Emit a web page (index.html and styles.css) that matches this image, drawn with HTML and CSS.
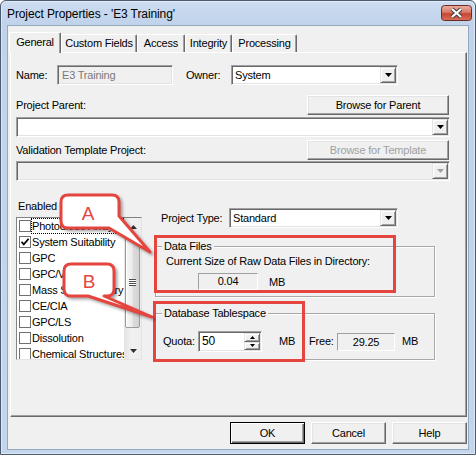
FILE: index.html
```html
<!DOCTYPE html>
<html lang="en">
<head>
<meta charset="utf-8">
<title>Project Properties</title>
<link rel="stylesheet" href="styles.css">
</head>
<body>
<div class="window">
  <div class="titlebar">
    <span class="title">Project Properties - 'E3 Training'</span>
    <div class="close">
      <svg width="31" height="16" viewBox="0 0 31 16">
        <defs>
          <linearGradient id="cg" x1="0" y1="0" x2="0" y2="1">
            <stop offset="0" stop-color="#eab0a3"/>
            <stop offset="0.45" stop-color="#d9796a"/>
            <stop offset="0.55" stop-color="#c54532"/>
            <stop offset="1" stop-color="#d8725c"/>
          </linearGradient>
        </defs>
        <rect x="0.5" y="0.5" width="30" height="15" rx="3" fill="url(#cg)" stroke="#6e2b23"/>
        <path d="M11 4 L20 12 M20 4 L11 12" stroke="#3f3f3f" stroke-width="4.2"/>
        <path d="M11 4 L20 12 M20 4 L11 12" stroke="#ffffff" stroke-width="2.2"/>
      </svg>
    </div>
  </div>

  <div class="client">
    <div class="tabs">
      <div class="tab active tab-general">General</div>
      <div class="tab tab-custom">Custom Fields</div>
      <div class="tab tab-access">Access</div>
      <div class="tab tab-integrity">Integrity</div>
      <div class="tab tab-processing">Processing</div>
    </div>

    <div class="panel">
      <div class="row name-row">
        <span class="lbl name-lbl">Name:</span>
        <div class="field disabled name-field">E3 Training</div>
        <span class="lbl owner-lbl">Owner:</span>
        <div class="combo owner-combo">
          <span class="combo-text">System</span>
          <span class="drop"><svg width="7" height="4" viewBox="0 0 7 4"><polygon points="0,0 7,0 3.5,4" fill="#000"/></svg></span>
        </div>
      </div>

      <div class="row browse-row parent-row">
        <span class="lbl">Project Parent:</span>
        <div class="btn browse-btn">Browse for Parent</div>
      </div>
      <div class="combo wide-combo parent-combo">
        <span class="combo-text"></span>
        <span class="drop"><svg width="7" height="4" viewBox="0 0 7 4"><polygon points="0,0 7,0 3.5,4" fill="#000"/></svg></span>
      </div>

      <div class="row browse-row template-row">
        <span class="lbl">Validation Template Project:</span>
        <div class="btn browse-btn disabled">Browse for Template</div>
      </div>
      <div class="combo wide-combo disabled template-combo">
        <span class="combo-text"></span>
        <span class="drop"><svg width="7" height="4" viewBox="0 0 7 4"><polygon points="0,0 7,0 3.5,4" fill="#a0a0a0"/></svg></span>
      </div>

      <div class="lower">
        <div class="left-col">
          <div class="lbl enabled-lbl">Enabled Options:</div>
          <div class="listbox">
            <div class="items">
              <div class="item focus"><span class="cb"></span><span class="itxt">Photodiode Array</span></div>
              <div class="item"><span class="cb"><svg width="10" height="10" viewBox="0 0 10 10"><path d="M1.5 4.8 L3.8 7.4 L8.6 1.8" fill="none" stroke="#000" stroke-width="1.7"/></svg></span><span class="itxt">System Suitability</span></div>
              <div class="item"><span class="cb"></span><span class="itxt">GPC</span></div>
              <div class="item"><span class="cb"></span><span class="itxt">GPC/Viscometry</span></div>
              <div class="item"><span class="cb"></span><span class="itxt">Mass Spectrometry</span></div>
              <div class="item"><span class="cb"></span><span class="itxt">CE/CIA</span></div>
              <div class="item"><span class="cb"></span><span class="itxt">GPC/LS</span></div>
              <div class="item"><span class="cb"></span><span class="itxt">Dissolution</span></div>
              <div class="item"><span class="cb"></span><span class="itxt">Chemical Structures</span></div>
            </div>
            <div class="vscroll">
              <div class="sb-arrow"><svg width="7" height="4" viewBox="0 0 7 4"><polygon points="0,4 7,4 3.5,0" fill="#303030"/></svg></div>
              <div class="sb-track">
                <div class="thumb"><span class="grip"></span></div>
              </div>
              <div class="sb-arrow"><svg width="7" height="4" viewBox="0 0 7 4"><polygon points="0,0 7,0 3.5,4" fill="#303030"/></svg></div>
            </div>
          </div>
        </div>

        <div class="right-col">
          <div class="row ptype-row">
            <span class="lbl ptype-lbl">Project Type:</span>
            <div class="combo ptype-combo">
              <span class="combo-text">Standard</span>
              <span class="drop"><svg width="7" height="4" viewBox="0 0 7 4"><polygon points="0,0 7,0 3.5,4" fill="#000"/></svg></span>
            </div>
          </div>

          <div class="group data-group">
            <span class="legend">Data Files</span>
            <div class="group-line">Current Size of Raw Data Files in Directory:</div>
            <div class="row size-row">
              <div class="static-box size-box">0.04</div>
              <span class="lbl size-unit">MB</span>
            </div>
          </div>

          <div class="group db-group">
            <span class="legend">Database Tablespace</span>
            <div class="row quota-row">
              <span class="lbl quota-lbl">Quota:</span>
              <div class="spin">
                <span class="spin-text">50</span>
                <span class="spin-btns">
                  <span class="spin-btn"><svg width="5" height="3" viewBox="0 0 5 3"><polygon points="0,3 5,3 2.5,0" fill="#000"/></svg></span>
                  <span class="spin-btn"><svg width="5" height="3" viewBox="0 0 5 3"><polygon points="0,0 5,0 2.5,3" fill="#000"/></svg></span>
                </span>
              </div>
              <span class="lbl quota-unit">MB</span>
              <span class="lbl free-lbl">Free:</span>
              <div class="static-box free-box">29.25</div>
              <span class="lbl free-unit">MB</span>
            </div>
          </div>
        </div>
      </div>
    </div>

    <div class="buttons">
      <div class="btn dlg-btn default">OK</div>
      <div class="btn dlg-btn">Cancel</div>
      <div class="btn dlg-btn">Help</div>
    </div>
  </div>

  <div class="hl hl-a"></div>
  <div class="hl hl-b"></div>

  <svg class="callouts" width="476" height="455" viewBox="0 0 476 455">
    <g class="bubble">
      <path d="M68 195 H112 Q119 195 119 202 V216 L150 252 L109 228 H68 Q61 228 61 221 V202 Q61 195 68 195 Z"/>
      <text x="88" y="219.5">A</text>
    </g>
    <g class="bubble">
      <path d="M71 264 H107 Q114 264 114 271 V289 Q114 296 107 296 H104 L152 317 L88 296 H71 Q64 296 64 289 V271 Q64 264 71 264 Z"/>
      <text x="89" y="288">B</text>
    </g>
  </svg>
</div>
</body>
</html>
```

FILE: styles.css
```css
* { box-sizing: border-box; }

html, body {
  margin: 0;
  padding: 0;
}

body {
  width: 476px;
  height: 455px;
  overflow: hidden;
  background: #ffffff;
  font-family: "Liberation Sans", Arial, sans-serif;
  font-size: 11px;
  color: #000;
}

/* ---------- window frame ---------- */
.window {
  position: relative;
  width: 476px;
  height: 455px;
  border: 1px solid #4b5b6f;
  border-radius: 6px 6px 0 0;
  background: linear-gradient(#cddcf0, #c0d3eb 24px, #c4d6ec);
  box-shadow: inset 0 0 0 1px rgba(255, 255, 255, 0.45);
  display: flex;
  flex-direction: column;
}

.titlebar {
  height: 24px;
  flex: none;
  display: flex;
  align-items: center;
  justify-content: space-between;
  padding-left: 6px;
  padding-right: 3px;
}

.title {
  font-size: 12px;
  line-height: 14px;
  margin-top: 2px;
  color: #000;
  letter-spacing: -0.1px;
}

.close {
  width: 31px;
  height: 16px;
  display: flex;
}

.client {
  flex: none;
  margin: 0 6px;
  height: 425px;
  background: #f0f0f0;
  border: 1px solid #95a9c3;
  letter-spacing: -0.2px;
}

/* ---------- tabs ---------- */
.tabs {
  display: flex;
  align-items: flex-end;
  height: 20px;
  margin-top: 6px;
  padding-left: 1px;
  position: relative;
  z-index: 1;
}

.tab {
  height: 18px;
  line-height: 16px;
  text-align: center;
  background: #f0f0f0;
  border-top: 1px solid #ffffff;
  border-left: 1px solid #ffffff;
  border-right: 1px solid #696969;
  box-shadow: inset -1px 0 0 #a0a0a0;
  border-radius: 2px 2px 0 0;
  white-space: nowrap;
}

.tab.active {
  height: 21px;
  margin-bottom: -1px;
  line-height: 19px;
}

.tab-general { width: 52px; }
.tab-custom { width: 76px; }
.tab-access { width: 48px; }
.tab-integrity { width: 47px; }
.tab-processing { width: 65px; }

/* ---------- panel ---------- */
.panel {
  margin-left: 2px;
  width: 457px;
  height: 365px;
  border-top: 1px solid #ffffff;
  border-left: 1px solid #ffffff;
  border-right: 1px solid #696969;
  border-bottom: 1px solid #696969;
  box-shadow: inset -1px -1px 0 #a0a0a0;
  padding: 12px 0 0 5px;
}

.row {
  display: flex;
  align-items: center;
}

.lbl {
  line-height: 13px;
  white-space: nowrap;
}

/* sunken controls */
.field,
.combo,
.spin {
  height: 20px;
  background: #ffffff;
  border-top: 1px solid #a0a0a0;
  border-left: 1px solid #a0a0a0;
  border-bottom: 1px solid #ffffff;
  border-right: 1px solid #ffffff;
  box-shadow: inset 1px 1px 0 #696969, inset -1px -1px 0 #e3e3e3;
}

.field {
  padding-left: 4px;
  line-height: 18px;
}

.field.disabled {
  background: #f0f0f0;
  color: #7a7a7a;
}

.combo {
  display: flex;
  align-items: stretch;
  padding: 1px;
}

.combo.disabled {
  background: #f0f0f0;
}

.combo-text {
  flex: 1;
  padding-left: 2px;
  line-height: 16px;
}

.drop {
  width: 16px;
  height: 16px;
  display: flex;
  align-items: center;
  justify-content: center;
  background: #f0f0f0;
  border-top: 1px solid #e3e3e3;
  border-left: 1px solid #e3e3e3;
  border-right: 1px solid #696969;
  border-bottom: 1px solid #696969;
  box-shadow: inset 1px 1px 0 #ffffff, inset -1px -1px 0 #a0a0a0;
}

/* raised buttons */
.btn {
  display: flex;
  align-items: center;
  justify-content: center;
  background: #f0f0f0;
  border-top: 1px solid #ffffff;
  border-left: 1px solid #ffffff;
  border-right: 1px solid #696969;
  border-bottom: 1px solid #696969;
  box-shadow: inset -1px -1px 0 #a0a0a0, inset 1px 1px 0 #e3e3e3;
  white-space: nowrap;
}

.btn.disabled {
  color: #a0a0a0;
}

/* name / owner row */
.name-row { height: 20px; }
.name-lbl { width: 41px; }
.name-field { width: 116px; }
.owner-lbl { width: 45px; margin-left: 13px; }
.owner-combo { width: 167px; }

/* browse rows */
.browse-row {
  width: 434px;
  height: 20px;
}

.browse-row .lbl { flex: 1; }

.parent-row { margin-top: 10px; }
.template-row { margin-top: 3px; }

.browse-btn {
  width: 142px;
  height: 20px;
  margin-right: 1px;
}

.wide-combo { width: 434px; }
.parent-combo { margin-top: 2px; }
.template-combo { margin-top: 1px; }

/* lower section */
.lower {
  margin-top: 19px;
  display: grid;
  grid-template-columns: 126px 280px;
  column-gap: 13px;
  align-items: start;
}

.enabled-lbl {
  padding-left: 2px;
}

.listbox {
  margin-top: 4px;
  height: 143px;
  display: flex;
  background: #ffffff;
  border-top: 1px solid #828282;
  border-left: 1px solid #828282;
  border-right: 1px solid #e3e3e3;
  border-bottom: 1px solid #e3e3e3;
  overflow: hidden;
}

.items {
  flex: 1;
  min-width: 0;
  overflow: hidden;
}

.item {
  height: 16px;
  display: flex;
  align-items: center;
}

.cb {
  flex: none;
  width: 12px;
  height: 12px;
  margin-left: 2px;
  border: 1px solid #707070;
  background: #ffffff;
  display: flex;
  align-items: center;
  justify-content: center;
}

.itxt {
  flex: 1;
  height: 16px;
  line-height: 16px;
  padding-left: 1px;
  white-space: nowrap;
  overflow: hidden;
}

.item.focus .itxt {
  outline: 1px dotted #000;
  outline-offset: -1px;
}

.vscroll {
  flex: none;
  width: 17px;
  display: flex;
  flex-direction: column;
  background: linear-gradient(to right, #e4e4e4, #f1f1f1 40%, #eeeeee);
  border-left: 1px solid #e6e6e6;
}

.sb-arrow {
  height: 17px;
  display: flex;
  align-items: center;
  justify-content: center;
}

.sb-track {
  flex: 1;
}

.thumb {
  margin: 2px 0 0 0;
  width: 15px;
  height: 91px;
  border: 1px solid #9b9b9b;
  border-radius: 2px;
  background: linear-gradient(to right, #f7f7f7, #ececec 45%, #dcdcdc 55%, #d2d2d2);
  box-shadow: inset 1px 1px 0 #ffffff;
  display: flex;
  align-items: center;
  justify-content: center;
}

.grip {
  width: 7px;
  height: 7px;
  background: linear-gradient(#4f4f4f 0 1px, #ffffff 1px 2px, #4f4f4f 2px 3px, #ffffff 3px 4px, #4f4f4f 4px 5px, #ffffff 5px 6px, #4f4f4f 6px 7px);
}

/* right column */
.ptype-row {
  margin-top: 8px;
  height: 20px;
  padding-left: 6px;
}

.ptype-lbl { width: 68px; }
.ptype-combo { width: 169px; }

.group {
  border: 1px solid #a8a8a8;
  box-shadow: 1px 1px 0 #ffffff, inset 1px 1px 0 #ffffff;
}

.legend {
  display: block;
  width: fit-content;
  margin-top: -7px;
  margin-left: 6px;
  padding: 0 2px;
  line-height: 13px;
  background: #f0f0f0;
}

.data-group {
  margin-top: 18px;
  height: 51px;
}

.group-line {
  margin-top: 2px;
  margin-left: 10px;
  line-height: 13px;
  white-space: nowrap;
}

.size-row {
  margin-top: 5px;
  height: 17px;
}

.static-box {
  background: #f0f0f0;
  border-top: 1px solid #a0a0a0;
  border-left: 1px solid #a0a0a0;
  border-right: 1px solid #ffffff;
  border-bottom: 1px solid #ffffff;
  text-align: center;
}

.size-box {
  width: 60px;
  height: 17px;
  line-height: 15px;
  margin-left: 42px;
}

.size-unit { margin-left: 11px; margin-top: 2px; }

.db-group {
  margin-top: 16px;
  height: 47px;
}

.quota-row {
  margin-top: 11px;
  height: 21px;
}

.quota-lbl { width: 35px; margin-left: 7px; }

.spin {
  width: 64px;
  height: 21px;
  display: flex;
  padding: 1px;
}

.spin-text {
  flex: 1;
  line-height: 17px;
  font-size: 12px;
  padding-left: 2px;
}

.spin-btns {
  width: 16px;
  display: flex;
  flex-direction: column;
}

.spin-btn {
  flex: 1;
  display: flex;
  align-items: center;
  justify-content: center;
  background: #f0f0f0;
  border-top: 1px solid #e3e3e3;
  border-left: 1px solid #e3e3e3;
  border-right: 1px solid #696969;
  border-bottom: 1px solid #696969;
  box-shadow: inset 1px 1px 0 #ffffff, inset -1px -1px 0 #a0a0a0;
}

.quota-unit { width: 30px; margin-left: 17px; }
.free-lbl { width: 28px; }

.free-box {
  width: 58px;
  height: 18px;
  line-height: 16px;
}

.free-unit { margin-left: 7px; }

/* dialog buttons */
.buttons {
  margin-top: 5px;
  height: 22px;
  display: flex;
  justify-content: flex-end;
  gap: 6px;
  padding-right: 1px;
}

.dlg-btn {
  width: 75px;
  height: 22px;
}

.dlg-btn.default {
  border: 1px solid #000000;
  box-shadow: inset 1px 1px 0 #ffffff, inset -1px -1px 0 #696969, inset -2px -2px 0 #a0a0a0;
}

/* ---------- annotations (overlays) ---------- */
.hl {
  position: absolute;
  border: 3px solid #e5453f;
}

.hl-a {
  left: 153px;
  top: 234px;
  width: 242px;
  height: 58px;
}

.hl-b {
  left: 152px;
  top: 300px;
  width: 152px;
  height: 61px;
}

.callouts {
  position: absolute;
  left: -1px;
  top: -1px;
  pointer-events: none;
}

.bubble path {
  fill: #ffffff;
  stroke: #e5453f;
  stroke-width: 3;
  stroke-linejoin: round;
  filter: drop-shadow(2px 2px 1.5px rgba(0, 0, 0, 0.35));
}

.bubble text {
  fill: #e5453f;
  font-family: "Liberation Sans", Arial, sans-serif;
  font-size: 19px;
  text-anchor: middle;
}
```
